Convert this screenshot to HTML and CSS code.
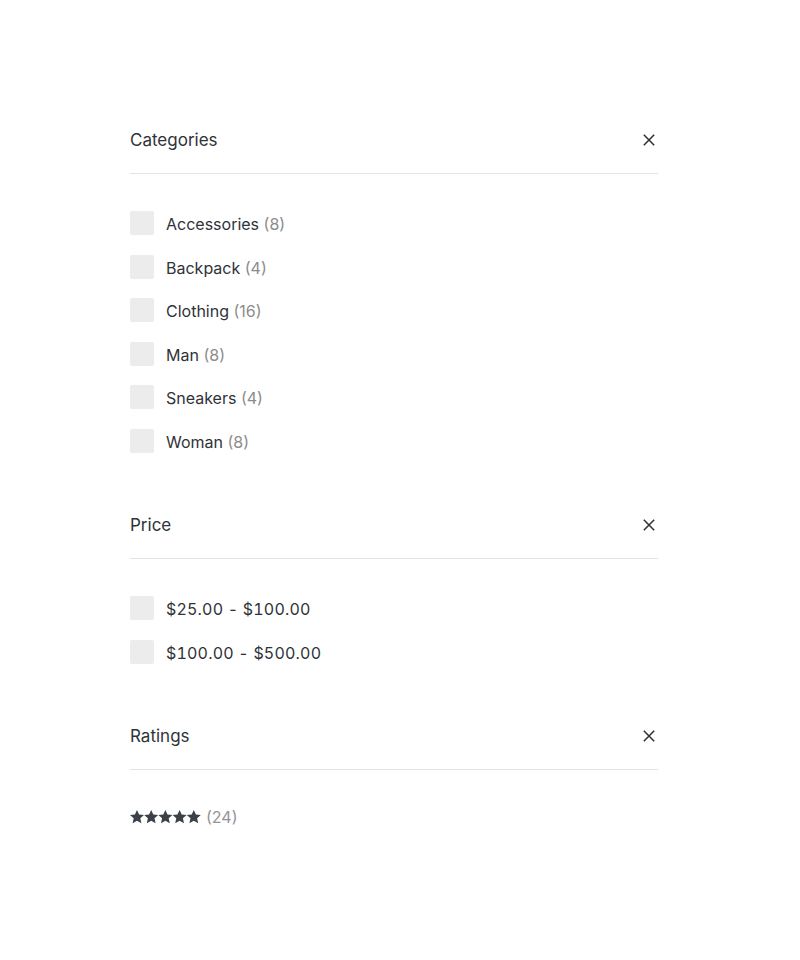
FILE: index.html
```html
<!DOCTYPE html>
<html>
<head>
<meta charset="utf-8">
<link rel="stylesheet" href="styles.css">
</head>
<body>
<div class="filters">
  <section class="group">
    <div class="group-head">
      <span class="group-title">Categories</span>
      <svg class="close" width="12" height="12" viewBox="0 0 12 12"><path d="M0.8 0.8 L11.2 11.2 M11.2 0.8 L0.8 11.2" stroke="#2b2f33" stroke-width="1.5" fill="none"/></svg>
    </div>
    <ul class="options">
      <li class="option"><span class="box"></span><span class="label">Accessories <span class="count">(8)</span></span></li>
      <li class="option"><span class="box"></span><span class="label">Backpack <span class="count">(4)</span></span></li>
      <li class="option"><span class="box"></span><span class="label">Clothing <span class="count">(16)</span></span></li>
      <li class="option"><span class="box"></span><span class="label">Man <span class="count">(8)</span></span></li>
      <li class="option"><span class="box"></span><span class="label">Sneakers <span class="count">(4)</span></span></li>
      <li class="option"><span class="box"></span><span class="label">Woman <span class="count">(8)</span></span></li>
    </ul>
  </section>
  <section class="group">
    <div class="group-head">
      <span class="group-title">Price</span>
      <svg class="close" width="12" height="12" viewBox="0 0 12 12"><path d="M0.8 0.8 L11.2 11.2 M11.2 0.8 L0.8 11.2" stroke="#2b2f33" stroke-width="1.5" fill="none"/></svg>
    </div>
    <ul class="options">
      <li class="option"><span class="box"></span><span class="label price">$25.00 - $100.00</span></li>
      <li class="option"><span class="box"></span><span class="label price">$100.00 - $500.00</span></li>
    </ul>
  </section>
  <section class="group">
    <div class="group-head">
      <span class="group-title">Ratings</span>
      <svg class="close" width="12" height="12" viewBox="0 0 12 12"><path d="M0.8 0.8 L11.2 11.2 M11.2 0.8 L0.8 11.2" stroke="#2b2f33" stroke-width="1.5" fill="none"/></svg>
    </div>
    <div class="rating">
      <span class="stars">
        <svg width="71" height="14" viewBox="0 0 71 14">
          <g fill="#3b4148">
            <path id="s" d="M7 0 L9.1 4.5 L14 5 L10.3 8.3 L11.4 13.3 L7 10.7 L2.6 13.3 L3.7 8.3 L0 5 L4.9 4.5 Z"/>
            <use href="#s" x="14.2"/>
            <use href="#s" x="28.4"/>
            <use href="#s" x="42.6"/>
            <use href="#s" x="56.8"/>
          </g>
        </svg>
      </span>
      <span class="count">(24)</span>
    </div>
  </section>
</div>
</body>
</html>
```
FILE: styles.css
```css
html, body {
  margin: 0;
  padding: 0;
  background: #ffffff;
}
body {
  font-family: Inter, "Noto Sans", "Liberation Sans", sans-serif;
  color: #2f3338;
}
.filters {
  width: 528px;
  margin-left: 130px;
  padding-top: 128px;
}
.group {
  margin-bottom: 60px;
}
.group-head {
  display: flex;
  align-items: center;
  justify-content: space-between;
  height: 24px;
  padding-bottom: 21px;
  border-bottom: 1px solid #e4e4e4;
}
.group-title {
  font-size: 17px;
  line-height: 24px;
  color: #2f3338;
}
.close {
  margin-right: 3px;
}
.options {
  list-style: none;
  margin: 37px 0 0 0;
  padding: 0;
  display: flex;
  flex-direction: column;
  gap: 19.6px;
}
.option {
  display: flex;
  align-items: center;
  height: 24px;
}
.box {
  width: 24px;
  height: 24px;
  border-radius: 2px;
  background: #ececec;
  margin-right: 12px;
  flex: none;
}
.label {
  font-size: 16px;
  line-height: 24px;
  position: relative;
  top: 1px;
  color: #2f3338;
}
.price {
  font-variant-numeric: tabular-nums;
  letter-spacing: 0.2px;
}
.count {
  color: #8c8c8c;
  font-size: 16px;
}
.rating {
  margin-top: 39px;
  display: flex;
  align-items: center;
  height: 16px;
}
.stars {
  display: flex;
  margin-right: 5px;
}
.rating .count {
  font-size: 16px;
  line-height: 16px;
  color: #929497;
}
```
